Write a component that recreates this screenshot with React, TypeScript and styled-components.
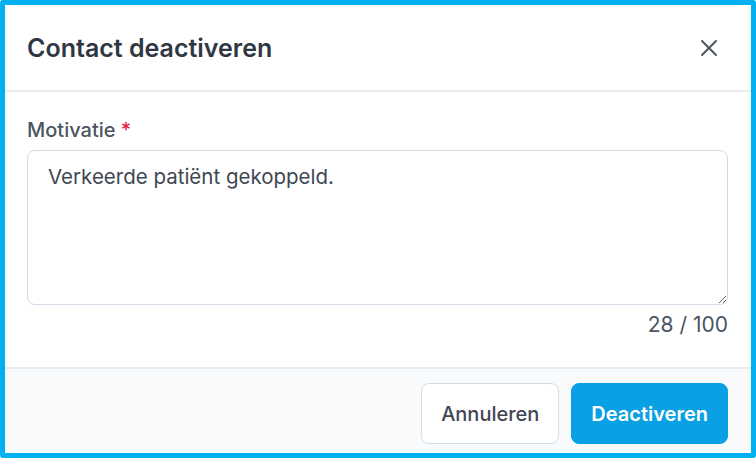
import React from "react";
import styled, { createGlobalStyle } from "styled-components";

const GlobalStyle = createGlobalStyle`
  html, body {
    margin: 0;
    padding: 0;
    background: #ffffff;
  }
  * {
    box-sizing: border-box;
  }
`;

const text = "Verkeerde patiënt gekoppeld.";
const max = 100;

export default function App() {
  return (
    <>
      <GlobalStyle />
      <Frame>
        <Header>
          <Title>Contact deactiveren</Title>
          <CloseButton aria-label="Sluiten">
            <svg width="18" height="18" viewBox="0 0 18 18" fill="none">
              <path
                d="M2 2L16 16M16 2L2 16"
                stroke="#4b5563"
                strokeWidth="2"
                strokeLinecap="round"
              />
            </svg>
          </CloseButton>
        </Header>
        <Body>
          <Label>
            Motivatie <Required>*</Required>
          </Label>
          <TextArea defaultValue={text} />
          <Counter>
            {text.length} / {max}
          </Counter>
        </Body>
        <Footer>
          <Button>Annuleren</Button>
          <Button $primary>Deactiveren</Button>
        </Footer>
      </Frame>
    </>
  );
}

const Frame = styled("div")`
  width: 756px;
  height: 458px;
  border: 5px solid #00b0f0;
  border-radius: 3px;
  background: #ffffff;
  display: flex;
  flex-direction: column;
  font-family: Inter, "Noto Sans", sans-serif;
  overflow: hidden;
`;

const Header = styled("div")`
  height: 87px;
  flex-shrink: 0;
  display: flex;
  align-items: center;
  justify-content: space-between;
  padding: 0 22px 0 22px;
  border-bottom: 2px solid #e8ecf1;
`;

const Title = styled("h2")`
  margin: 0;
  font-size: 25px;
  font-weight: 600;
  color: #2f3742;
`;

const CloseButton = styled("button")`
  width: 40px;
  height: 40px;
  border: none;
  background: none;
  display: flex;
  align-items: center;
  justify-content: center;
  padding: 0;
  cursor: pointer;
`;

const Body = styled("div")`
  display: flex;
  flex-direction: column;
  padding: 24px 23px 28px 22px;
`;

const Label = styled("label")`
  font-size: 20px;
  font-weight: 500;
  line-height: 28px;
  color: #4b5563;
  margin-bottom: 6px;
`;

const Required = styled("span")`
  color: #e11d48;
`;

const TextArea = styled("textarea")`
  height: 155px;
  padding: 12px 20px;
  border: 1px solid #d3dce7;
  border-radius: 8px;
  font-family: Inter, "Noto Sans", sans-serif;
  font-size: 20.5px;
  line-height: 28px;
  color: #3f4753;
  resize: vertical;
  outline: none;
`;

const Counter = styled("div")`
  margin-top: 6px;
  text-align: right;
  font-size: 21px;
  line-height: 28px;
  color: #4b5563;
`;

const Footer = styled("div")`
  flex: 1;
  display: flex;
  justify-content: flex-end;
  align-items: flex-start;
  gap: 12px;
  padding: 14px 23px 0 22px;
  background: #f8fafc;
  border-top: 2px solid #e6ebf1;
`;

const Button = styled("button")<{ $primary?: boolean }>`
  height: 61px;
  padding: 0 19px;
  border-radius: 8px;
  font-family: Inter, "Noto Sans", sans-serif;
  font-size: 20px;
  font-weight: ${(p) => (p.$primary ? 600 : 500)};
  color: ${(p) => (p.$primary ? "#ffffff" : "#3f4753")};
  background: ${(p) => (p.$primary ? "#0aa0e4" : "#ffffff")};
  border: 1px solid ${(p) => (p.$primary ? "#0aa0e4" : "#d3dce7")};
  cursor: pointer;
`;
